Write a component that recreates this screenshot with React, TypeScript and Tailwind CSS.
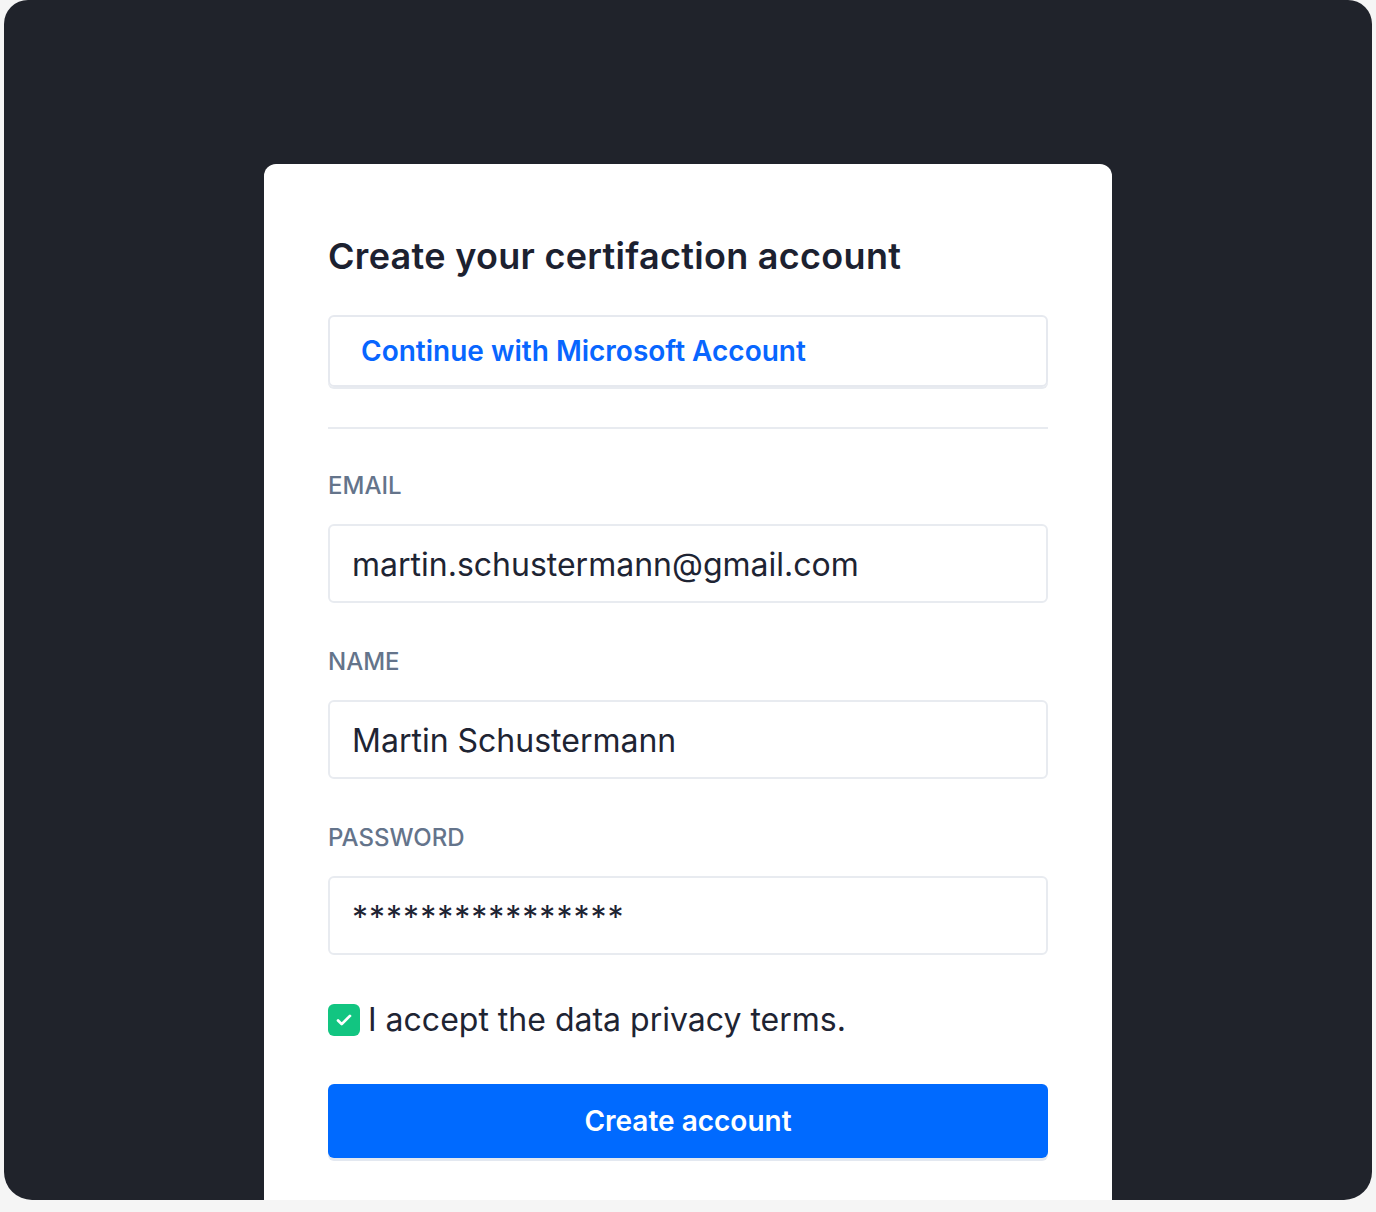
const font = { fontFamily: "Inter, 'Noto Sans', sans-serif" };

const Field: React.FC<{ label: string; value: string; className?: string; valueClassName?: string }> = ({
    label,
    value,
    className,
    valueClassName,
}) => (
    <div className={className}>
        <label className="block text-[24px] font-medium leading-[30px] text-[#64748b]">{label}</label>
        <div
            className={
                "mt-[23px] flex h-[79px] items-center rounded-md border-2 border-[#e8ebf0] px-[22px] text-[32px] text-[#1e2433] " +
                (valueClassName ?? "pt-[3px]")
            }
        >
            {value}
        </div>
    </div>
);

export default function App() {
    return (
        <div className="min-h-screen bg-[#f5f5f5]" style={font}>
            <div className="mx-1 h-[1200px] overflow-hidden rounded-b-[28px] rounded-t-[24px] bg-[#20232b] pt-[164px]">
                <div className="mx-auto w-[848px] rounded-t-xl bg-white px-16 pb-16 pt-16">
                    <h1 className="text-[36px] font-semibold leading-[56px] tracking-[0.3px] text-[#1c2130]">
                        Create your certifaction account
                    </h1>
                    <button className="mt-[31px] flex h-[72px] w-full items-center rounded-md border-2 border-[#e6e9ef] px-[31px] text-[28px] font-semibold text-[#0866ff] shadow-[0_2px_0_#e8ebf0]">
                        Continue with Microsoft Account
                    </button>
                    <hr className="mt-10 h-0.5 border-0 bg-[#e8ebf0]" />
                    <Field className="mt-[42px]" label="EMAIL" value="martin.schustermann@gmail.com" />
                    <Field className="mt-[44px]" label="NAME" value="Martin Schustermann" />
                    <Field
                        className="mt-[44px]"
                        label="PASSWORD"
                        value="****************"
                        valueClassName="tracking-[1px] pt-1"
                    />
                    <label className="mt-[45px] flex items-center gap-2 text-[32px] leading-[40px] text-[#1e2433]">
                        <span className="flex h-8 w-8 items-center justify-center rounded-md bg-[#12c581]">
                            <svg viewBox="0 0 24 24" className="h-[22px] w-[22px]" fill="none" stroke="white" strokeWidth={3} strokeLinecap="round" strokeLinejoin="round">
                                <path d="M5.5 12.5l4 4L18.5 7.5" />
                            </svg>
                        </span>
                        I accept the data privacy terms.
                    </label>
                    <button className="mt-[44px] h-[74px] w-full rounded-md bg-[#006aff] text-[28px] font-semibold text-white shadow-[0_3px_0_#e3e8f0]">
                        Create account
                    </button>
                </div>
            </div>
        </div>
    );
}
